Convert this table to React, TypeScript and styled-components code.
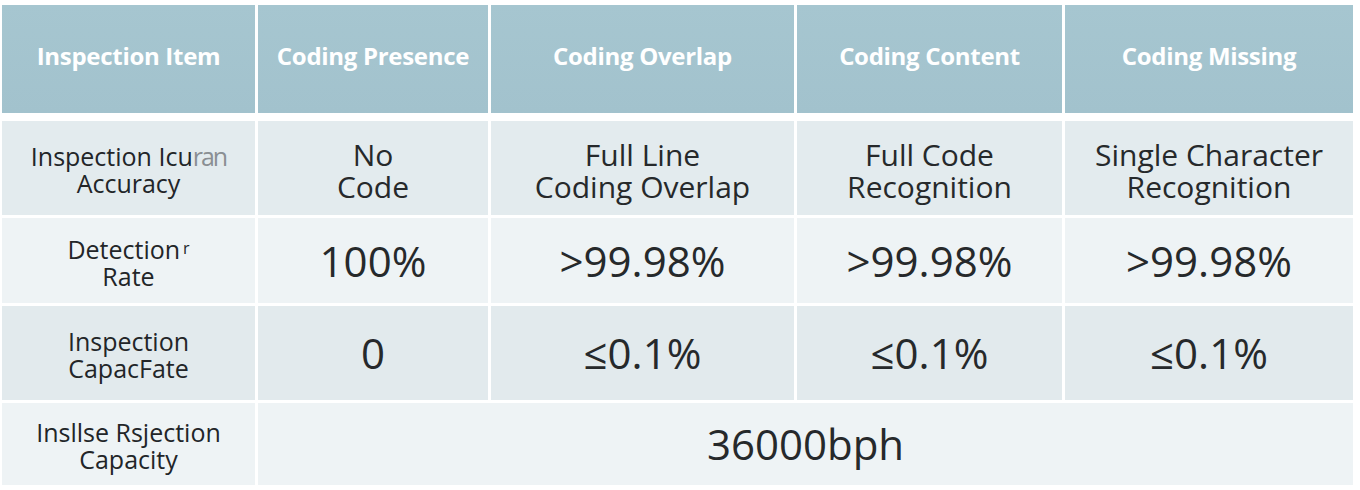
import React from "react";
import styled, { createGlobalStyle } from "styled-components";

const COLUMNS = "253px 230px 303px 265px 288px";

const headers = [
  "Inspection Item",
  "Coding Presence",
  "Coding Overlap",
  "Coding Content",
  "Coding Missing",
];

const GlobalStyle = createGlobalStyle`
  html, body {
    margin: 0;
    padding: 0;
    background: #ffffff;
  }

  body {
    font-family: "Open Sans", "Noto Sans", "Liberation Sans", sans-serif;
    color: #262a2c;
  }
`;

const Table = styled.div`
  display: flex;
  flex-direction: column;
  gap: 3px;
  width: 1360px;
  height: 490px;
  padding: 5px 0 0 2px;
  box-sizing: border-box;
`;

const Row = styled.div<{ $height: number; $bg: string }>`
  display: grid;
  grid-template-columns: ${COLUMNS};
  column-gap: 3px;
  height: ${(p) => p.$height}px;
  --cell-bg: ${(p) => p.$bg};
`;

const HeaderRow = styled(Row)`
  margin-bottom: 5px;
`;

const HeaderCell = styled.div`
  display: flex;
  align-items: center;
  justify-content: center;
  padding-bottom: 8px;
  box-sizing: border-box;
  background: linear-gradient(180deg, #a6c6d0 0%, #a2c2cd 100%);
  color: #ffffff;
  font-size: 24px;
  font-weight: 700;
  letter-spacing: -0.3px;
`;

const Cell = styled.div<{ $span?: number }>`
  display: flex;
  align-items: center;
  justify-content: center;
  text-align: center;
  background: var(--cell-bg);
  grid-column: span ${(p) => p.$span ?? 1};
`;

const Label = styled.div`
  font-size: 25px;
  line-height: 27px;
  color: #222528;
  padding-top: 3px;
`;

const TwoLine = styled.div`
  font-size: 30px;
  line-height: 32px;
  color: #26292b;
  padding-top: 5px;
`;

const Value = styled.div`
  font-size: 42px;
  line-height: 46px;
  color: #26292b;
`;

const Ghost = styled.span`
  color: #8a8f93;
  letter-spacing: -2px;
`;

const Tiny = styled.span`
  font-size: 16px;
  vertical-align: 5px;
  margin-left: 3px;
`;

export default function App() {
  return (
    <>
      <GlobalStyle />
      <Table>
        <HeaderRow $height={108} $bg="#a4c4ce">
          {headers.map((h) => (
            <HeaderCell key={h}>{h}</HeaderCell>
          ))}
        </HeaderRow>

        <Row $height={94} $bg="#e3ebee">
          <Cell>
            <Label>
              Inspection Icu<Ghost>ran</Ghost>
              <br />
              Accuracy
            </Label>
          </Cell>
          <Cell>
            <TwoLine>
              No
              <br />
              Code
            </TwoLine>
          </Cell>
          <Cell>
            <TwoLine>
              Full Line
              <br />
              Coding Overlap
            </TwoLine>
          </Cell>
          <Cell>
            <TwoLine>
              Full Code
              <br />
              Recognition
            </TwoLine>
          </Cell>
          <Cell>
            <TwoLine>
              Single Character
              <br />
              Recognition
            </TwoLine>
          </Cell>
        </Row>

        <Row $height={85} $bg="#eef3f5">
          <Cell>
            <Label>
              Detection<Tiny>r</Tiny>
              <br />
              Rate
            </Label>
          </Cell>
          <Cell>
            <Value>100%</Value>
          </Cell>
          <Cell>
            <Value>&gt;99.98%</Value>
          </Cell>
          <Cell>
            <Value>&gt;99.98%</Value>
          </Cell>
          <Cell>
            <Value>&gt;99.98%</Value>
          </Cell>
        </Row>

        <Row $height={94} $bg="#e2eaed">
          <Cell>
            <Label>
              Inspection
              <br />
              CapacFate
            </Label>
          </Cell>
          <Cell>
            <Value>0</Value>
          </Cell>
          <Cell>
            <Value>≤0.1%</Value>
          </Cell>
          <Cell>
            <Value>≤0.1%</Value>
          </Cell>
          <Cell>
            <Value>≤0.1%</Value>
          </Cell>
        </Row>

        <Row $height={82} $bg="#eef3f5">
          <Cell>
            <Label>
              Insllse Rsjection
              <br />
              Capacity
            </Label>
          </Cell>
          <Cell $span={4}>
            <Value>36000bph</Value>
          </Cell>
        </Row>
      </Table>
    </>
  );
}
